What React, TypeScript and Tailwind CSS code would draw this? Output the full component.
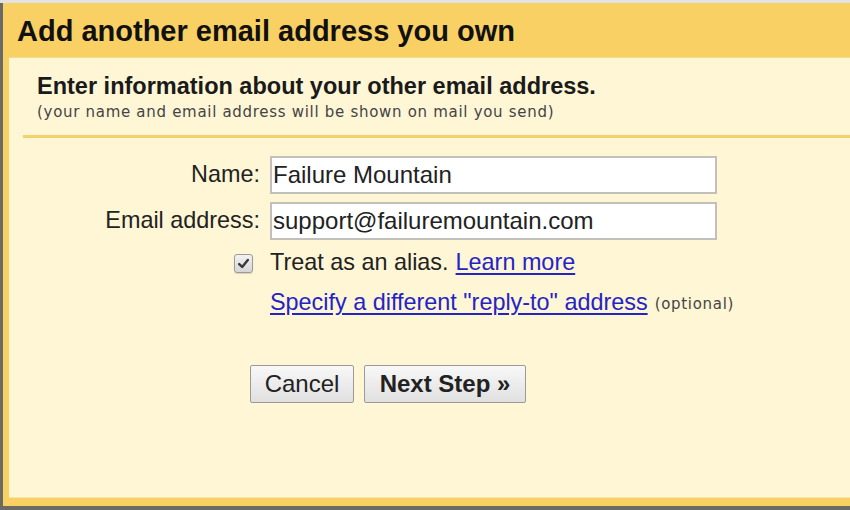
import React from "react";

export default function App() {
  return (
    <div
      className="w-[850px] h-[510px] bg-[#6b6b66] flex flex-col overflow-hidden"
      style={{ fontFamily: '"Liberation Sans", Arial, sans-serif' }}
    >
      <div className="h-[3px] bg-[#e2e2e2] shrink-0" />
      <div className="flex-1 flex pl-[3px]">
        <div className="flex-1 flex flex-col bg-[#f8d064] pl-[6px] pb-[8px]">
          <div className="h-[54px] flex items-center pl-[8px] pt-[3px] shrink-0">
            <h1 className="text-[29px] font-bold text-[#111] leading-none">
              Add another email address you own
            </h1>
          </div>
          <div className="flex-1 bg-[#fff6d6] border-t border-[#f6dc8a] border-b border-b-[#fbe6a6] flex flex-col">
            <div className="pl-[28px] pt-[15px]">
              <div className="text-[23.5px] font-bold text-[#1a1a1a] leading-[26px]">
                Enter information about your other email address.
              </div>
              <div
                className="text-[15px] text-[#444] leading-[18px] mt-[4px] tracking-[0.7px]"
                style={{ fontFamily: '"DejaVu Sans", Verdana, sans-serif' }}
              >
                (your name and email address will be shown on mail you send)
              </div>
            </div>
            <div className="ml-[14px] mt-[14px] h-[3px] bg-[#f3d26c]" />
            <div className="flex flex-col pt-[18px]">
              <div className="flex items-center h-[38px]">
                <label className="w-[261px] text-right pr-[10px] text-[23.4px] text-[#222]">Name:</label>
                <div className="w-[447px] h-[38px] bg-white border-2 border-[#c2c0ba] flex items-center px-[1px] text-[24px] text-[#222]">
                  Failure Mountain
                </div>
              </div>
              <div className="flex items-center h-[38px] mt-[8px]">
                <label className="w-[261px] text-right pr-[10px] text-[23.4px] text-[#222]">Email address:</label>
                <div className="w-[447px] h-[38px] bg-white border-2 border-[#c2c0ba] flex items-center px-[1px] text-[24px] text-[#222]">
                  support@failuremountain.com
                </div>
              </div>
              <div className="flex items-center mt-[8px] h-[30px]">
                <div className="w-[261px] flex justify-end pr-[17px]">
                  <div className="w-[19px] h-[19px] rounded-[3px] border border-[#9a9a9a] bg-gradient-to-b from-[#f2f2f2] to-[#d6d6d6] flex items-center justify-center shadow-[0_1px_1px_rgba(0,0,0,0.15)]">
                    <svg width="13" height="13" viewBox="0 0 12 12">
                      <path d="M2 6.5 L4.8 9.2 L10 2.8" stroke="#3a3a3a" strokeWidth="2.3" fill="none" strokeLinecap="round" strokeLinejoin="round" />
                    </svg>
                  </div>
                </div>
                <span className="text-[23.4px] text-[#222]">Treat as an alias.</span>
                <a className="ml-[7px] text-[23.4px] text-[#2424c6] underline underline-offset-[3px]">Learn more</a>
              </div>
              <div className="flex items-center mt-[10px] h-[30px] pl-[261px]">
                <a className="text-[23.4px] text-[#2424c6] underline underline-offset-[3px]">
                  Specify a different "reply-to" address
                </a>
                <span
                  className="ml-[7px] text-[15px] text-[#444] mt-[3px] tracking-[0.7px]"
                  style={{ fontFamily: '"DejaVu Sans", Verdana, sans-serif' }}
                >
                  (optional)
                </span>
              </div>
              <div className="flex mt-[47px] pl-[241px] gap-[10px]">
                <button className="w-[104px] h-[38px] bg-gradient-to-b from-[#f8f8f8] to-[#e0e0e0] border border-[#9a9a9a] rounded-[2px] text-[24px] text-[#222] flex items-center justify-center">
                  Cancel
                </button>
                <button className="w-[162px] h-[38px] bg-gradient-to-b from-[#f8f8f8] to-[#e0e0e0] border border-[#9a9a9a] rounded-[2px] text-[24px] font-bold text-[#222] flex items-center justify-center">
                  Next Step »
                </button>
              </div>
            </div>
          </div>
        </div>
      </div>
      <div className="h-[4px] bg-[#6b6b66] shrink-0" />
    </div>
  );
}
